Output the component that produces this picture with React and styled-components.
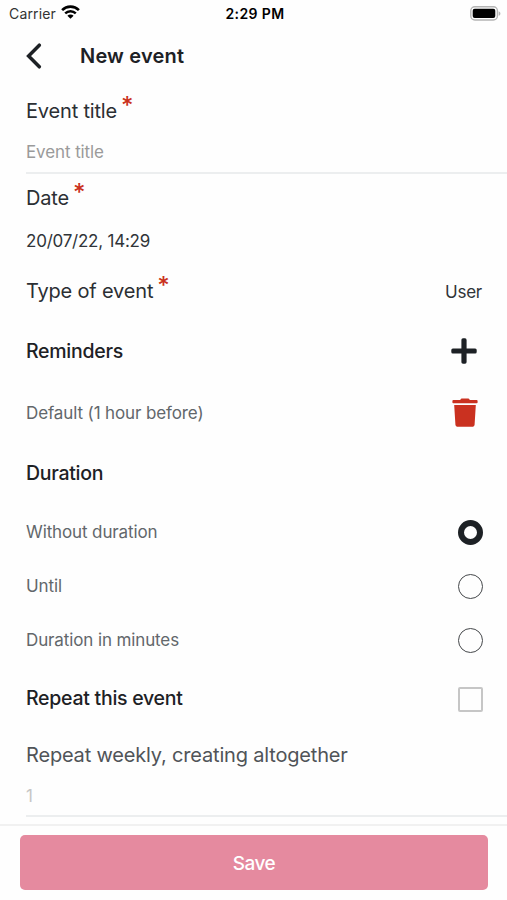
import React, { useState } from 'react';
import styled, { createGlobalStyle } from 'styled-components';

const GlobalStyle = createGlobalStyle`
  * {
    box-sizing: border-box;
  }
  body {
    margin: 0;
    background: #fefefe;
    font-family: Inter, "Liberation Sans", sans-serif;
    color: #1d2125;
  }
`;

const DURATIONS = ['Without duration', 'Until', 'Duration in minutes'];

const WifiIcon = () => (
  <svg width="19" height="14" viewBox="0 0 19 14" fill="none" stroke="#000">
    <path d="M1.1 5.1a11.9 11.9 0 0 1 16.8 0" strokeWidth="2.6" />
    <path d="M4.2 8.4a7.5 7.5 0 0 1 10.6 0" strokeWidth="2.4" />
    <path d="M9.5 13.8 6.4 10.8a4.4 4.4 0 0 1 6.2 0z" fill="#000" stroke="none" />
  </svg>
);

const BatteryIcon = () => (
  <svg width="31" height="15" viewBox="0 0 31 15">
    <rect x="0.8" y="0.8" width="26.6" height="13.2" rx="4" fill="#fff" stroke="#b4b4b4" strokeWidth="1.4" />
    <rect x="2.7" y="2.7" width="22.6" height="9.4" rx="2" fill="#000" />
    <path d="M28.6 5.2c2.4.8 2.4 3.8 0 4.6z" fill="#b4b4b4" />
  </svg>
);

const BackIcon = () => (
  <svg width="17" height="27" viewBox="0 0 17 27" fill="none" stroke="#1d2125" strokeWidth="3.5">
    <path d="M14.3 2.2 3.6 13 14.3 23.8" strokeLinecap="round" strokeLinejoin="miter" />
  </svg>
);

const PlusIcon = () => (
  <svg width="26" height="26" viewBox="0 0 26 26" fill="#1d2125">
    <rect x="0.3" y="10.4" width="25.4" height="5.2" rx="1.6" />
    <rect x="10.4" y="0.3" width="5.2" height="25.4" rx="1.6" />
  </svg>
);

const TrashIcon = () => (
  <svg width="26" height="30" viewBox="0 0 26 30" fill="#ca3120">
    <path d="M1.4 2h6.8l.8-1.2Q9.3.4 9.8.4h6.4q.5 0 .8.4l.8 1.2h6.8q1 0 1 1v1.5q0 .8-1 .8H1.4q-1 0-1-.8V3q0-1 1-1z" />
    <path d="M2.2 7h21.6l-1.2 19.2q-.2 2.6-2.8 2.6H6.2q-2.6 0-2.8-2.6z" />
  </svg>
);

const App = () => {
  const [duration, setDuration] = useState(0);

  return (
    <StylePage>
      <GlobalStyle />
      <StyleStatusBar>
        <div className="carrier">
          <span>Carrier</span>
          <WifiIcon />
        </div>
        <span className="time">2:29 PM</span>
        <div className="battery">
          <BatteryIcon />
        </div>
      </StyleStatusBar>
      <StyleHeader>
        <BackIcon />
        <h1>New event</h1>
      </StyleHeader>

      <StyleForm>
        <Row $height={38}>
          <Label>
            Event title<Required>*</Required>
          </Label>
        </Row>
        <Field $height={44}>Event title</Field>
        <Row $height={48}>
          <Label>
            Date<Required>*</Required>
          </Label>
        </Row>
        <Row $height={36}>
          <Value>20/07/22, 14:29</Value>
        </Row>
        <Row $height={66}>
          <Label>
            Type of event<Required>*</Required>
          </Label>
          <Value>User</Value>
        </Row>
        <Row $height={54} $end={30}>
          <Heading>Reminders</Heading>
          <PlusIcon />
        </Row>
        <Row $height={70} $end={29}>
          <Option>Default (1 hour before)</Option>
          <TrashIcon />
        </Row>
        <Row $height={50}>
          <Heading>Duration</Heading>
        </Row>
        <StyleOptions>
          {DURATIONS.map((name, i) => (
            <Row key={name} $height={54} $end={24} onClick={() => setDuration(i)}>
              <Option>{name}</Option>
              <Radio $checked={duration === i} />
            </Row>
          ))}
        </StyleOptions>
        <Row $height={62} $end={24}>
          <Heading>Repeat this event</Heading>
          <Checkbox />
        </Row>
        <Row $height={52}>
          <Label $muted>Repeat weekly, creating altogether</Label>
        </Row>
        <Field $height={36} $disabled>
          1
        </Field>
      </StyleForm>

      <StyleFooter>
        <SaveButton>Save</SaveButton>
      </StyleFooter>
    </StylePage>
  );
};

// START = STYLING
const StylePage = styled.div`
  display: flex;
  flex-direction: column;
  width: 507px;
  height: 900px;
  overflow: hidden;
  background: #fefefe;
  white-space: nowrap;
`;

const StyleStatusBar = styled.div`
  display: grid;
  grid-template-columns: 1fr auto 1fr;
  align-items: center;
  height: 28px;
  padding: 0 6px 2px 9px;
  font-size: 14px;
  color: #000;
  .carrier {
    display: flex;
    align-items: center;
    gap: 5px;
    color: #333;
    letter-spacing: 0.15px;
    svg {
      margin-top: -2px;
    }
  }
  .time {
    font-weight: 600;
    letter-spacing: 0.4px;
  }
  .battery {
    display: flex;
    justify-content: flex-end;
  }
`;

const StyleHeader = styled.div`
  display: flex;
  align-items: center;
  gap: 38px;
  height: 56px;
  padding-left: 25px;
  h1 {
    margin: 0;
    font-size: 20px;
    font-weight: 600;
    letter-spacing: 0.2px;
  }
`;

const StyleForm = styled.div`
  display: flex;
  flex-direction: column;
  height: 740px;
  padding: 8px 0 0 26px;
`;

const Row = styled.div`
  display: flex;
  flex-shrink: 0;
  align-items: center;
  justify-content: space-between;
  height: ${(p) => p.$height}px;
  padding-right: ${(p) => p.$end || 25}px;
`;

const Label = styled.div`
  font-size: 20px;
  letter-spacing: -0.18px;
  color: ${(p) => (p.$muted ? '#505458' : '#2b2f33')};
`;

const Required = styled.span`
  display: inline-block;
  margin-left: 4px;
  font-size: 24px;
  line-height: 20px;
  font-weight: 500;
  color: #ca3120;
  transform: translateY(-4px);
`;

const Heading = styled.div`
  font-size: 19.5px;
  font-weight: 550;
  letter-spacing: -0.27px;
`;

const Value = styled.div`
  padding-top: 2px;
  font-size: 17px;
  letter-spacing: -0.23px;
  color: #303438;
`;

const Option = styled.div`
  font-size: 17px;
  letter-spacing: -0.12px;
  color: #62676b;
`;

const Field = styled.div`
  display: flex;
  flex-shrink: 0;
  align-items: center;
  height: ${(p) => p.$height}px;
  padding: ${(p) => (p.$disabled ? '0 0 4px' : '2px 0 0')};
  border-bottom: 2px solid #eceeef;
  font-size: 17px;
  letter-spacing: -0.1px;
  color: ${(p) => (p.$disabled ? '#c6c6c6' : '#9a9a9a')};
`;

const StyleOptions = styled.div`
  padding-top: 7px;
`;

const Radio = styled.div`
  width: 25px;
  height: 25px;
  border: ${(p) => (p.$checked ? '6.5px solid #1d2125' : '1.5px solid #45484b')};
  border-radius: 50%;
`;

const Checkbox = styled.div`
  width: 25px;
  height: 25px;
  margin-top: 2px;
  border: 2px solid #c6c6c6;
  border-radius: 2px;
`;

const StyleFooter = styled.div`
  flex: 1;
  padding: 9px 19px 10px 20px;
  border-top: 2px solid #f1f1f1;
`;

const SaveButton = styled.button`
  display: block;
  width: 100%;
  height: 55px;
  padding: 2px 0 0;
  border: 0;
  border-radius: 5px;
  background: #e58a9f;
  color: #fff;
  font-family: inherit;
  font-size: 19px;
  font-weight: 550;
  letter-spacing: -0.5px;
`;

export default App;
